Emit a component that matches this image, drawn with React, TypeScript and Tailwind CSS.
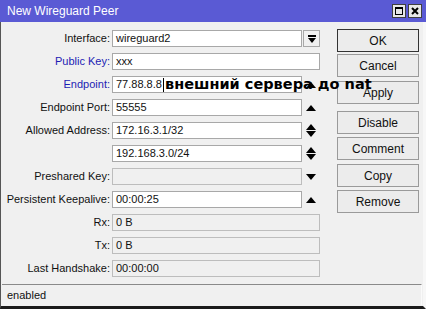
import React from "react";

const F = { fontFamily: '"Liberation Sans", Arial, sans-serif' };

function Tri({ dir }: { dir: "up" | "down" }) {
  return (
    <svg width="10" height="6" viewBox="0 0 10 6">
      {dir === "up" ? <polygon points="0,6 10,6 5,0" fill="#000" /> : <polygon points="0,0 10,0 5,6" fill="#000" />}
    </svg>
  );
}

function Arrow({ kind }: { kind: "up" | "down" | "both" }) {
  return (
    <div className="w-[18px] h-[17px] flex flex-col items-center justify-center gap-[1px]">
      {kind === "both" ? (
        <>
          <Tri dir="up" />
          <Tri dir="down" />
        </>
      ) : (
        <Tri dir={kind} />
      )}
    </div>
  );
}

type Row = {
  label: string;
  value?: string;
  blue?: boolean;
  disabled?: boolean;
  full?: boolean;
  arrow?: "up" | "down" | "both" | "drop";
  caret?: boolean;
  overlay?: boolean;
};

const rows: Row[] = [
  { label: "Interface:", value: "wireguard2", arrow: "drop" },
  { label: "Public Key:", value: "xxx", blue: true, full: true },
  { label: "Endpoint:", value: "77.88.8.8", blue: true, arrow: "up", caret: true, overlay: true },
  { label: "Endpoint Port:", value: "55555", arrow: "up" },
  { label: "Allowed Address:", value: "172.16.3.1/32", arrow: "both" },
  { label: "", value: "192.168.3.0/24", arrow: "both" },
  { label: "Preshared Key:", value: "", disabled: true, arrow: "down" },
  { label: "Persistent Keepalive:", value: "00:00:25", arrow: "up" },
  { label: "Rx:", value: "0 B", disabled: true, full: true },
  { label: "Tx:", value: "0 B", disabled: true, full: true },
  { label: "Last Handshake:", value: "00:00:00", disabled: true, full: true },
];

const buttons: { t: string; mt: string; def?: boolean }[] = [
  { t: "OK", mt: "mt-0", def: true },
  { t: "Cancel", mt: "mt-[2px]" },
  { t: "Apply", mt: "mt-[4px]" },
  { t: "Disable", mt: "mt-[7px]" },
  { t: "Comment", mt: "mt-[3px]" },
  { t: "Copy", mt: "mt-[4px]" },
  { t: "Remove", mt: "mt-[3px]" },
];

export default function App() {
  return (
    <div className="w-[426px] h-[309px] bg-[#f0f0f0] flex flex-col relative overflow-hidden" style={F}>
      {/* title bar */}
      <div className="h-[22px] bg-[#5a5ad4] flex items-center pl-[7px] pr-[4px] shrink-0">
        <span className="text-white text-[12px] leading-none flex-1">New Wireguard Peer</span>
        <div className="flex gap-[2px]">
          <div className="w-[14px] h-[14px] bg-[#e8e8e8] border border-[#404040] flex items-center justify-center">
            <div className="w-[8px] h-[8px] border border-black border-t-2" />
          </div>
          <div className="w-[14px] h-[14px] bg-[#e8e8e8] border border-[#404040] flex items-center justify-center">
            <svg width="8" height="8" viewBox="0 0 8 8">
              <path d="M1 1 L7 7 M7 1 L1 7" stroke="#000" strokeWidth="2" />
            </svg>
          </div>
        </div>
      </div>

      {/* body */}
      <div className="flex-1 flex border-l border-l-[#555] border-r-[3px] border-r-[#f7f7f7] border-b-[3px] border-b-[#1a1a1a]">
        <div className="flex-1 flex flex-col">
          <div className="flex">
            {/* form */}
            <div className="flex flex-col gap-[6px] pt-[8px] w-[322px]">
              {rows.map((r, i) => (
                <div key={i} className="flex items-center h-[17px] relative">
                  <div
                    className={
                      "w-[111px] pr-[2px] text-right text-[11px] leading-none whitespace-nowrap " +
                      (r.blue ? "text-[#1c1cb4]" : "text-[#111]")
                    }
                  >
                    {r.label}
                  </div>
                  <div
                    className={
                      "h-[17px] border flex items-center pl-[3px] text-[11px] leading-none text-[#111] " +
                      (r.full ? "w-[208px] " : "w-[190px] ") +
                      (r.disabled ? "bg-[#f0f0f0] border-[#bdbdbd]" : "bg-white border-[#a8a8a8]")
                    }
                  >
                    {r.value}
                    {r.caret && <span className="inline-block w-[1px] h-[14px] bg-black ml-[1px]" />}
                  </div>
                  {r.arrow === "drop" && (
                    <div className="ml-[1px] w-[17px] h-[17px] border border-[#a8a8a8] bg-[#f0f0f0] flex flex-col items-center justify-center gap-[1px]">
                      <div className="w-[8px] h-[2px] bg-black" />
                      <svg width="8" height="5" viewBox="0 0 8 5">
                        <polygon points="0,0 8,0 4,5" fill="#000" />
                      </svg>
                    </div>
                  )}
                  {r.arrow && r.arrow !== "drop" && <Arrow kind={r.arrow} />}
                  {r.overlay && (
                    <span
                      className="absolute left-[164px] top-[1px] text-[14.5px] font-bold leading-none text-black whitespace-nowrap"
                      style={{ fontFamily: '"DejaVu Sans", Verdana, sans-serif' }}
                    >
                      внешний сервера до nat
                    </span>
                  )}
                </div>
              ))}
            </div>
            {/* buttons */}
            <div className="flex flex-col pt-[7px] ml-[14px]">
              {buttons.map((b) => (
                <div
                  key={b.t}
                  className={
                    "w-[82px] h-[23px] flex items-center justify-center text-[12px] text-[#111] bg-[#ececec] border " +
                    b.mt +
                    " " +
                    (b.def ? "border-[#333] border-[1.5px]" : "border-[#9a9a9a]")
                  }
                >
                  {b.t}
                </div>
              ))}
            </div>
          </div>
          <div className="flex-1" />
          {/* status bar */}
          <div className="h-[21px] mx-[1px] mb-[1px] border-t border-t-[#8a8a8a] border-r border-r-[#fafafa] flex items-center pl-[5px] text-[11px] text-[#111]">
            enabled
          </div>
        </div>
      </div>
    </div>
  );
}
